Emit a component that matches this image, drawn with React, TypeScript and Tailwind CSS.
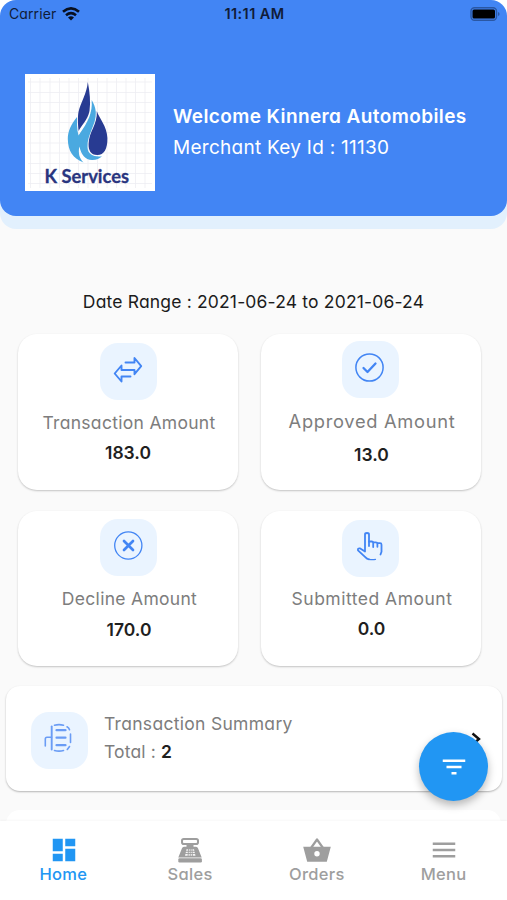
import React from "react";
import { MdDashboard, MdFilterList, MdMenu } from "react-icons/md";
import clsx from "clsx";

const stroke = {
  fill: "none",
  stroke: "#4285f4",
  strokeLinecap: "round" as const,
  strokeLinejoin: "round" as const,
};

function TransferIcon() {
  return (
    <svg viewBox="0 0 57 57" className="w-full h-full" {...stroke} strokeWidth="1.9">
      <path d="M25.500 19.500H34.500v-4.500l6.700 8.200-6.700 8V27H21.500v-4.500L14.700 30.500l6.800 8v-5H30.500" />
    </svg>
  );
}

function CheckIcon() {
  return (
    <svg viewBox="0 0 57 57" className="w-full h-full" {...stroke}>
      <circle cx="27.500" cy="26.500" r="13.600" strokeWidth="1.500" />
      <path d="M21.500 27l4 4 8-8.500" strokeWidth="2.300" />
    </svg>
  );
}

function CrossIcon() {
  return (
    <svg viewBox="0 0 57 57" className="w-full h-full" {...stroke}>
      <circle cx="28.300" cy="26.500" r="13.600" strokeWidth="1.300" />
      <path d="M24 22l9 9M33 22l-9 9" strokeWidth="2.700" />
    </svg>
  );
}

function HandIcon() {
  return (
    <svg viewBox="0 0 57 57" className="w-full h-full" {...stroke} strokeWidth="1.800">
      <path d="M27 39.300q-2-.3-4-2.500L16 30.300q-.6-2.400 2.200-1.900L23 31.500V14.500q0-1.500 2-1.500t2 1.500V26" />
      <path d="M27 21.500h2.700q1.500 0 1.500 1.500v4M31.200 22.300h2.700q1.500 0 1.500 1.500v3M35.400 23.200h2.700q1.400 0 1.400 1.500v7l-1 2.800" />
      <path d="M27 39.300q3.500.7 6.500 0" strokeWidth="1.200" />
    </svg>
  );
}

function SummaryIcon() {
  return (
    <svg viewBox="0 0 57 57" className="w-full h-full" {...stroke} stroke="#6a9cf5" strokeWidth="1.600">
      <path d="M14.300 34v-7q0-1.700 1.700-1.700h4.500M23.500 13.300q4.500-1.400 9 0M23.500 38.500q4.500 1.300 9 0M36 14.800q2 1 2.500 3M39.500 22v8.500M38.500 34.500l-2.200 3" />
      <path d="M20.700 14.500v23" strokeWidth="1.900" />
      <path d="M25.500 18.200h9M25.500 25.700h9M25.500 33.200h9" strokeWidth="2.200" />
    </svg>
  );
}

function CashRegisterIcon() {
  return (
    <svg viewBox="0 0 26 26" className="w-[26px] h-[26px]">
      <rect x="5" y="2" width="16" height="5" rx="1.800" fill="none" stroke="#9e9e9e" strokeWidth="2" />
      <path d="M9.500 8h7v3h-7z" fill="#9e9e9e" />
      <path d="M7 9.700h12q1.500 0 2 1.500l3.700 9.300H1.300L5 11.200q.5-1.500 2-1.500z" fill="#9e9e9e" />
      <rect x="1.300" y="21.300" width="23.600" height="4.200" rx="1.200" fill="#9e9e9e" />
      <path d="M9.500 12.200h7.500l1.500 6.500H8z" fill="#f5f5f5" />
      <path d="M7.500 14.300h12M7.500 16.500h12M11.500 12l-.4 7M13.250 12v7M15 12l.4 7" stroke="#9e9e9e" strokeWidth=".9" />
    </svg>
  );
}

function BasketIcon() {
  return (
    <svg viewBox="0 0 28 26" className="w-[28px] h-[26px]">
      <path d="M8 11l6-8.500 6 8.500" fill="none" stroke="#9e9e9e" strokeWidth="2.200" strokeLinejoin="round" />
      <path fillRule="evenodd" fill="#9e9e9e" d="M.2 9.700h27.600l-4 15H4.200zM14 14a2.700 2.700 0 1 0 0 5.400 2.700 2.700 0 0 0 0-5.400z" />
    </svg>
  );
}

function Logo() {
  return (
    <svg viewBox="25 74 130 117" className="w-[130px] h-[117px] bg-white shrink-0">
      <path
        d="M28 82h124M28 92.500h124M28 102.500h124M28 112.500h124M28 122.500h124M28 132.500h124M28 143h124M28 153h124M28 163.500h124M28 173.500h124M28 183.500h124M30.500 78v110M40 78v110M50 78v110M59.500 78v110M69 78v110M78.500 78v110M88 78v110M97.500 78v110M107 78v110M116.500 78v110M126 78v110M135.500 78v110M145 78v110"
        stroke="#eeeef2"
        strokeWidth=".8"
      />
      <path fill="#283b92" d="M87.800 82C87 93 80.500 103 78.500 112c-1 5-.6 13 .2 19C81 126 87.700 120 89.500 111c1.300-9 .3-19-1.700-29z" />
      <path
        fill="#4aa9e0"
        d="M91.700 100c.8 13-3 21-13.200 35.500C76.800 129 77 123 77 117c-6 7-9.300 15-9.200 22C68 151 73 158.500 83.500 162.500c-4-4-5.500-9-4.200-16 2 8 5.700 13.300 12.700 13.500 4.500.1 7.500-1.500 10-3.800-7.500 1-14.300-1.500-14.500-9C87 134 96.500 125 95.800 112c-.5-5-2-8.500-4.100-12z"
      />
      <path fill="#283b92" d="M96.800 111C99 118 107 126 107.400 138c.2 11-3.400 17-10 17-7 0-9-5-8.800-11C89 131 97.500 125 96.800 111z" />
      <text
        x="44.500"
        y="182.500"
        textLength="84.500"
        lengthAdjust="spacingAndGlyphs"
        fill="#29357f"
        stroke="#29357f"
        strokeWidth=".3"
        strokeLinejoin="round"
        className="font-['Lato',sans-serif] font-bold text-[18px]"
      >
        K Services
      </text>
    </svg>
  );
}

function StatusBar() {
  return (
    <div className="h-[27px] px-[9px] grid grid-cols-3 items-center text-[#101c38]">
      <div className="flex items-center gap-[6px]">
        <span className="text-[14px] tracking-[0.1px]">Carrier</span>
        <svg viewBox="0 0 18 14" className="w-[18px] h-[14px]" fill="none" stroke="#081020" strokeWidth="2.600">
          <path d="M1 4.800Q9-2.100 17 4.800M4 8.200q5-4.100 10 0" />
          <path d="M6 10.500q3-2.400 6 0L9 13.600z" fill="#081020" stroke="none" />
        </svg>
      </div>
      <span className="text-[14.5px] font-semibold text-center whitespace-nowrap tracking-[0.4px] ml-[2px]">11:11 AM</span>
      <svg viewBox="0 0 30 14" className="w-[30px] h-[14px] justify-self-end -mr-[2px]">
        <rect x="1" y=".8" width="25.500" height="12.400" rx="3.500" fill="none" stroke="#2a57a3" strokeWidth="1.400" />
        <rect x="2.500" y="2.500" width="22.500" height="9" rx="1.500" fill="#000" />
        <path d="M28 5v4q1.600-.5 1.600-2T28 5z" fill="#2a57a3" />
      </svg>
    </div>
  );
}

const cards = [
  { label: "Transaction Amount", value: "183.0", icon: TransferIcon, pad: "pt-[9px]", labelCls: "mt-[11px] ml-[2px] text-[17.5px] tracking-[0.3px]", valueCls: "mt-[6px]" },
  { label: "Approved Amount", value: "13.0", icon: CheckIcon, pad: "pt-[7px]", labelCls: "mt-[11px] ml-[3px] text-[18.3px] tracking-[0.7px]", valueCls: "mt-[10px] ml-[2px]" },
  { label: "Decline Amount", value: "170.0", icon: CrossIcon, pad: "pt-2", labelCls: "mt-[11px] ml-[3px] text-[17.5px] tracking-[0.3px]", valueCls: "mt-[7px] ml-[2px]" },
  { label: "Submitted Amount", value: "0.0", icon: HandIcon, pad: "pt-[9px]", labelCls: "mt-[10px] ml-[3px] text-[17.5px] tracking-[0.5px]", valueCls: "mt-[6px] ml-[2px]" },
];

const tabs = [
  { label: "Home", icon: <MdDashboard className="w-[30px] h-[30px] ml-px" />, active: true },
  { label: "Sales", icon: <CashRegisterIcon />, active: false },
  { label: "Orders", icon: <BasketIcon />, active: false },
  { label: "Menu", icon: <MdMenu className="w-[30px] h-[30px]" />, active: false },
];

export default function App() {
  return (
    <div className="relative w-[507px] h-[900px] overflow-hidden bg-[#fafafa] flex flex-col font-['Inter',sans-serif] [font-feature-settings:'cv11']">
      {/* Header */}
      <div className="bg-linear-to-b from-white from-50% to-[#e2f0fd] to-50% rounded-b-[16px] pb-[13px] shrink-0">
        <header className="h-[216px] bg-[#4285f4] rounded-[16px]">
          <StatusBar />
          <div className="mt-[47px] ml-[25px] flex">
            <Logo />
            <div className="ml-[18px] pt-[31px] text-white whitespace-nowrap">
              <p className="text-[19px] leading-6 font-semibold tracking-[0.4px]">Welcome Kinnera Automobiles</p>
              <p className="mt-[7px] text-[19px] leading-6 tracking-[0.27px]">Merchant Key Id : 11130</p>
            </div>
          </div>
        </header>
      </div>

      {/* Scrolling content */}
      <main className="flex-1 min-h-0 overflow-hidden">
        <p className="mt-[61px] text-center text-[17.5px] leading-6 tracking-[0.17px] text-[#1c1c1c] whitespace-nowrap">
          Date Range : 2021-06-24 to 2021-06-24
        </p>

        <div className="mt-[20px] ml-[18px] grid grid-cols-[220px_220px] gap-x-[22.5px] gap-y-[21px]">
          {cards.map(({ label, value, icon: Icon, pad, labelCls, valueCls }) => (
            <div
              key={label}
              className={clsx("h-[155.5px] bg-white rounded-[19px] shadow-[0_1px_2px_rgba(0,0,0,0.22)] flex flex-col items-center", pad)}
            >
              <div className="w-[57px] h-[57px] rounded-[18px] bg-[#eaf4ff] shrink-0">
                <Icon />
              </div>
              <p className={clsx("leading-6 text-[#7d7d7d] whitespace-nowrap", labelCls)}>{label}</p>
              <p className={clsx("text-[17.5px] leading-6 font-semibold text-[#1f1f1f]", valueCls)}>{value}</p>
            </div>
          ))}
        </div>

        <div className="mt-[20px] ml-[6px] mr-[5px] h-[105px] bg-white rounded-[14px] shadow-[0_1px_2px_rgba(0,0,0,0.28)] flex items-center pl-[25px] pr-[21px]">
          <div className="w-[57px] h-[57px] mt-[3px] rounded-[18px] bg-[#eaf4ff]">
            <SummaryIcon />
          </div>
          <div className="ml-4 flex-1 text-[17.5px] leading-7 text-[#7d7d7d] -mt-[2px]">
            <p className="tracking-[0.3px]">Transaction Summary</p>
            <p className="tracking-[0.15px]">
              Total : <b className="font-semibold text-[#1f1f1f]">2</b>
            </p>
          </div>
          <svg viewBox="0 0 10 14" className="w-[10px] h-[14px]" fill="none" stroke="#111" strokeWidth="2.400">
            <path d="M1.500 1.500L8 7l-6.500 5.500" />
          </svg>
        </div>

        <div className="mt-[19px] mx-[6px] h-[105px] bg-white rounded-[14px]" />
      </main>

      {/* Bottom tabs */}
      <nav className="h-[79px] shrink-0 bg-white grid grid-cols-4 shadow-[0_-1px_2px_rgba(0,0,0,0.03)]">
        {tabs.map((tab) => (
          <div key={tab.label} className={clsx("flex flex-col items-center pt-[14px]", tab.active ? "text-[#2196f3]" : "text-[#9e9e9e]")}>
            <div className="h-[29px] flex items-center">{tab.icon}</div>
            <span className="text-[16.5px] leading-5 font-medium tracking-[0.3px]">{tab.label}</span>
          </div>
        ))}
      </nav>

      {/* Floating filter button */}
      <button className="absolute left-[419px] top-[732px] w-[69px] h-[69px] rounded-full bg-[#2196f3] text-white flex items-center justify-center shadow-[0_4px_8px_rgba(0,0,0,0.28)]">
        <MdFilterList className="w-[30px] h-[30px]" />
      </button>
    </div>
  );
}
